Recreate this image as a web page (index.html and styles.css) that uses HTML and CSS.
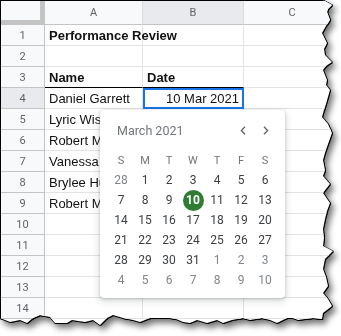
FILE: index.html
```html
<!DOCTYPE html>
<html>
<head>
<meta charset="utf-8">
<link rel="stylesheet" href="styles.css">
</head>
<body>
<div class="frame">
  <div class="paper">
    <div class="sheet">
      <div class="grid">
        <div class="corner"></div>
        <div class="colh">A</div>
        <div class="colh sel">B</div>
        <div class="colh">C</div>

        <div class="rowh">1</div><div class="cell bold">Performance Review</div><div class="cell"></div><div class="cell"></div>
        <div class="rowh">2</div><div class="cell"></div><div class="cell"></div><div class="cell"></div>
        <div class="rowh">3</div><div class="cell bold under">Name</div><div class="cell bold under">Date</div><div class="cell"></div>
        <div class="rowh sel">4</div><div class="cell">Daniel Garrett</div><div class="cell right active">10 Mar 2021</div><div class="cell"></div>
        <div class="rowh">5</div><div class="cell"><span class="covered">Lyric Wise</span></div><div class="cell"></div><div class="cell"></div>
        <div class="rowh">6</div><div class="cell"><span class="covered">Robert Mason</span></div><div class="cell"></div><div class="cell"></div>
        <div class="rowh">7</div><div class="cell"><span class="covered">Vanessa Cole</span></div><div class="cell"></div><div class="cell"></div>
        <div class="rowh">8</div><div class="cell"><span class="covered">Brylee Hughes</span></div><div class="cell"></div><div class="cell"></div>
        <div class="rowh">9</div><div class="cell"><span class="covered">Robert Miller</span></div><div class="cell"></div><div class="cell"></div>
        <div class="rowh">10</div><div class="cell"></div><div class="cell"></div><div class="cell"></div>
        <div class="rowh">11</div><div class="cell"></div><div class="cell"></div><div class="cell"></div>
        <div class="rowh">12</div><div class="cell"></div><div class="cell"></div><div class="cell"></div>
        <div class="rowh">13</div><div class="cell"></div><div class="cell"></div><div class="cell"></div>
        <div class="rowh">14</div><div class="cell"></div><div class="cell"></div><div class="cell"></div>
      </div>

      <div class="picker">
        <div class="picker-head">
          <span class="month">March 2021</span>
          <span class="nav">
            <span class="navbtn"><svg width="6" height="9" viewBox="0 0 6 9"><path d="M5 0.8 L1.4 4.5 L5 8.2" fill="none" stroke="#5f6368" stroke-width="1.3"/></svg></span>
            <span class="navbtn"><svg width="6" height="9" viewBox="0 0 6 9"><path d="M1 0.8 L4.6 4.5 L1 8.2" fill="none" stroke="#5f6368" stroke-width="1.3"/></svg></span>
          </span>
        </div>
        <div class="days">
          <span class="wd">S</span><span class="wd">M</span><span class="wd">T</span><span class="wd">W</span><span class="wd">T</span><span class="wd">F</span><span class="wd">S</span>
          <span class="d mute">28</span><span class="d">1</span><span class="d">2</span><span class="d">3</span><span class="d">4</span><span class="d">5</span><span class="d">6</span>
          <span class="d">7</span><span class="d">8</span><span class="d">9</span><span class="d"><b class="today">10</b></span><span class="d">11</span><span class="d">12</span><span class="d">13</span>
          <span class="d">14</span><span class="d">15</span><span class="d">16</span><span class="d">17</span><span class="d">18</span><span class="d">19</span><span class="d">20</span>
          <span class="d">21</span><span class="d">22</span><span class="d">23</span><span class="d">24</span><span class="d">25</span><span class="d">26</span><span class="d">27</span>
          <span class="d">28</span><span class="d">29</span><span class="d">30</span><span class="d">31</span><span class="d mute">1</span><span class="d mute">2</span><span class="d mute">3</span>
          <span class="d mute">4</span><span class="d mute">5</span><span class="d mute">6</span><span class="d mute">7</span><span class="d mute">8</span><span class="d mute">9</span><span class="d mute">10</span>
        </div>
      </div>
    </div>
  </div>
</div>
</body>
</html>
```

FILE: styles.css
```css
html, body {
  margin: 0;
  padding: 0;
  background: #fff;
}

.frame {
  width: 341px;
  height: 336px;
  background: #fff;
  overflow: hidden;
}

.paper {
  width: 341px;
  height: 336px;
  filter: drop-shadow(1px 0 0 #000) drop-shadow(0 1px 0 #000) drop-shadow(3px 4px 3px rgba(0,0,0,0.55));
}

.sheet {
  position: relative;
  width: 341px;
  height: 336px;
  box-sizing: border-box;
  border-top: 1px solid #000;
  border-left: 1px solid #000;
  background: #fff;
  clip-path: polygon(0px 0px, 323px 0px, 332px 5px, 328px 9px, 327px 12px, 330px 20px, 326px 26px, 322px 33px, 327px 43px, 324px 49px, 325px 55px, 332px 62px, 326px 66px, 323px 70px, 327px 80px, 326px 85px, 330px 90px, 326px 104px, 324px 110px, 322px 117px, 328px 124px, 332px 133px, 327px 147px, 325px 153px, 323px 160px, 325px 170px, 323px 176px, 330px 184px, 326px 189px, 323px 193px, 330px 203px, 327px 211px, 325px 219px, 323px 229px, 324px 238px, 323px 246px, 333px 251px, 325px 259px, 323px 269px, 326px 277px, 328px 286px, 323px 293px, 328px 299px, 332px 306px, 327px 310px, 323px 313px, 322px 319px, 313px 318px, 305px 319px, 298px 320px, 293px 318px, 287px 318px, 277px 323px, 270px 320px, 262px 318px, 256px 319px, 250px 320px, 243px 318px, 232px 320px, 223px 323px, 217px 320px, 207px 323px, 197px 320px, 190px 323px, 183px 322px, 176px 319px, 170px 318px, 160px 318px, 150px 318px, 140px 322px, 133px 320px, 123px 318px, 113px 315px, 107px 318px, 100px 325px, 93px 320px, 85px 322px, 78px 321px, 72px 320px, 67px 323px, 55px 323px, 50px 317px, 40px 315px, 33px 318px, 27px 323px, 20px 320px, 10px 322px, 0px 318px);
}

.grid {
  display: grid;
  grid-template-columns: 44px 98px 101px 1fr;
  grid-template-rows: 24px repeat(14, 21px);
  font-family: "Liberation Sans", Arial, sans-serif;
}

.grid > div {
  box-sizing: border-box;
}

.corner {
  background: #f8f9fa;
  border-right: 1px solid #c4c4c4;
  border-bottom: 1px solid #c4c4c4;
  box-shadow: inset -4px -4px 0 #c4c4c4;
}

.colh {
  background: #f8f9fa;
  border-right: 1px solid #dadce0;
  border-bottom: 1px solid #c4c4c4;
  color: #5f6368;
  font-family: Roboto, "Liberation Sans", sans-serif;
  font-size: 11px;
  display: flex;
  align-items: center;
  justify-content: center;
}

.rowh {
  background: #f8f9fa;
  border-right: 1px solid #c4c4c4;
  border-bottom: 1px solid #c4c4c4;
  color: #5f6368;
  font-family: Roboto, "Liberation Sans", sans-serif;
  font-size: 11px;
  display: flex;
  align-items: center;
  justify-content: center;
}

.sel {
  background: #e8eaed;
}

.cell {
  border-right: 1px solid #e2e3e3;
  border-bottom: 1px solid #e2e3e3;
  font-size: 13px;
  color: #111;
  padding: 0 4px;
  display: flex;
  align-items: center;
  white-space: nowrap;
  overflow: visible;
}

.covered {
  display: block;
  max-width: 51px;
  overflow: hidden;
}

.bold {
  font-weight: bold;
}

.under {
  border-bottom-color: #000;
}

.right {
  justify-content: flex-end;
}

.active {
  outline: 2px solid #1a73e8;
  outline-offset: -2px;
}

.picker {
  position: absolute;
  left: 99px;
  top: 109px;
  width: 185px;
  height: 188px;
  box-sizing: border-box;
  padding: 0 8px 8px 9px;
  background: #fff;
  border-radius: 4px;
  box-shadow: 0 1px 3px rgba(60,64,67,0.3), 0 3px 7px 2px rgba(60,64,67,0.12);
  font-family: Roboto, "Liberation Sans", sans-serif;
}

.picker-head {
  height: 40px;
  display: flex;
  align-items: center;
}

.month {
  padding-left: 8px;
  font-size: 12.5px;
  color: #70757a;
}

.nav {
  margin-left: auto;
  display: flex;
}

.navbtn {
  width: 23px;
  height: 24px;
  display: flex;
  align-items: center;
  justify-content: center;
}

.days {
  display: grid;
  grid-template-columns: repeat(7, 24px);
  grid-auto-rows: 20px;
}

.wd, .d {
  display: flex;
  align-items: center;
  justify-content: center;
}

.wd {
  font-size: 11px;
  color: #70757a;
}

.d {
  font-size: 12px;
  color: #3c4043;
}

.d.mute {
  color: #80868b;
}

.today {
  width: 21px;
  height: 21px;
  border-radius: 50%;
  background: #2e7d32;
  color: #fff;
  font-weight: bold;
  display: flex;
  align-items: center;
  justify-content: center;
}
```
